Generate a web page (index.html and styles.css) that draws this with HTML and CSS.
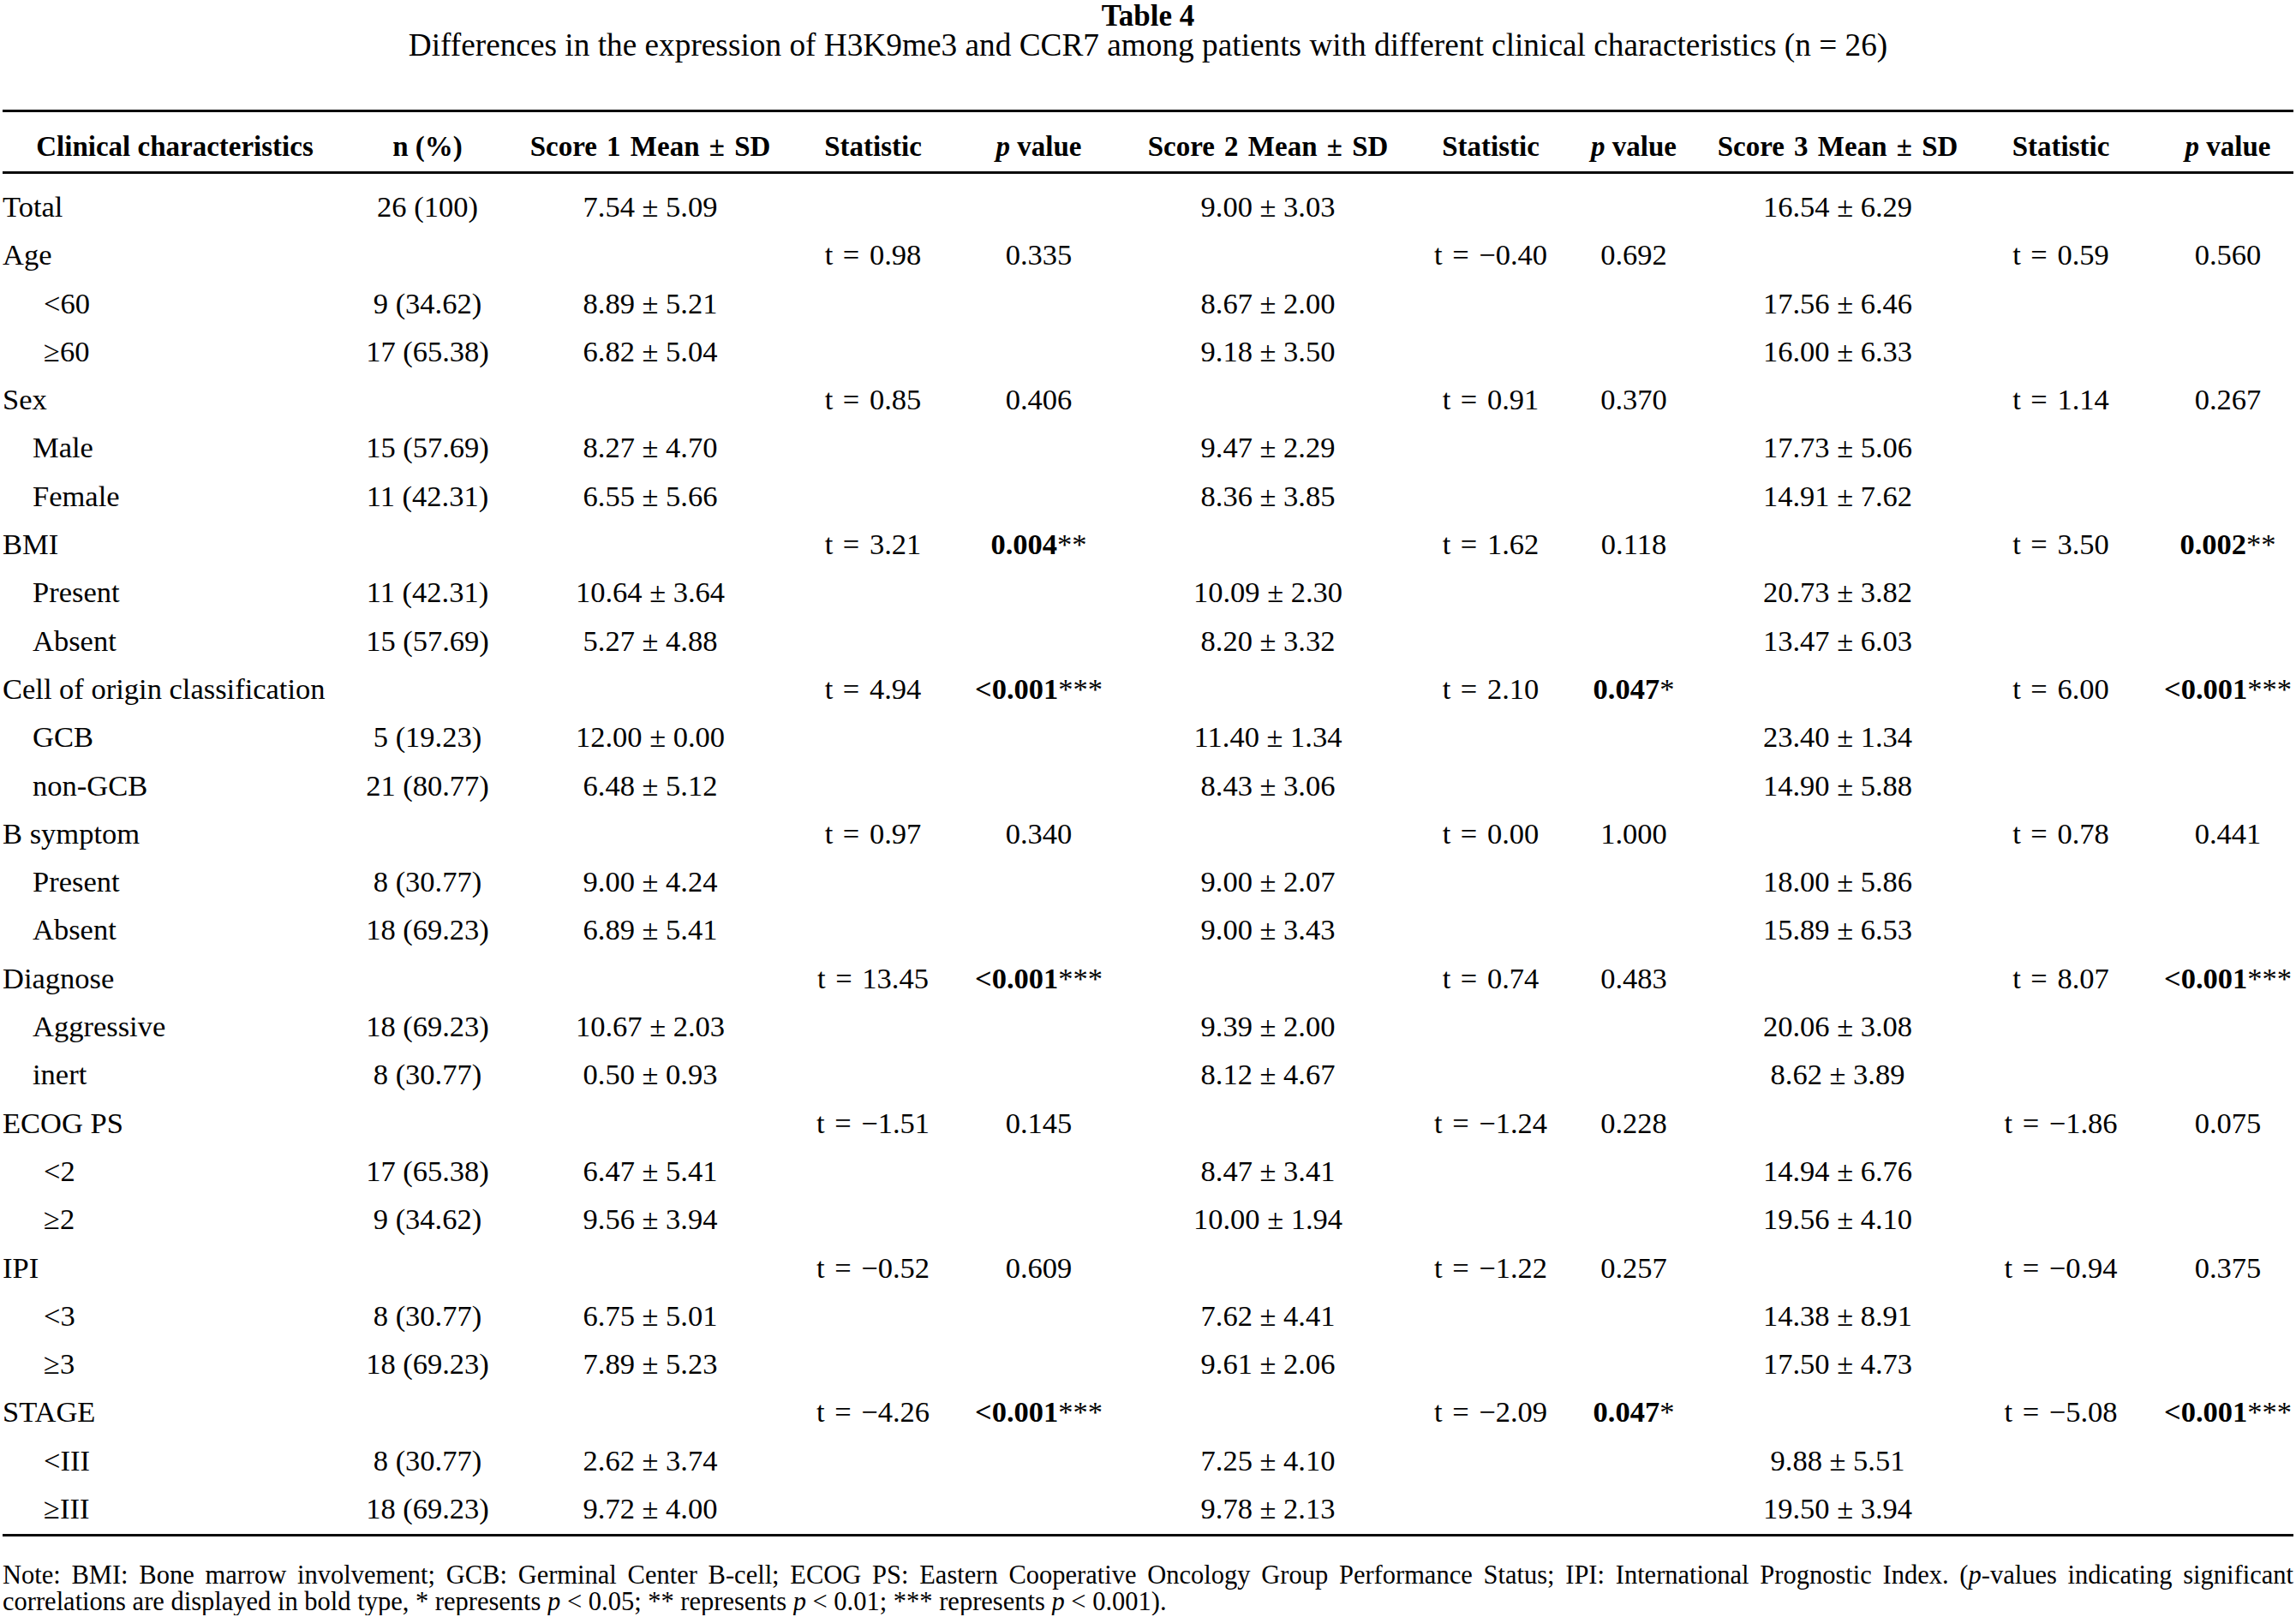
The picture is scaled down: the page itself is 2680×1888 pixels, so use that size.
FILE: index.html
```html
<!DOCTYPE html>
<html lang="en">
<head>
<meta charset="utf-8">
<title>Table 4</title>
<link rel="stylesheet" href="styles.css">
</head>
<body>
<div class="page">
  <div class="title">Table 4</div>
  <div class="subtitle">Differences in the expression of H3K9me3 and CCR7 among patients with different clinical characteristics (n = 26)</div>
  <table class="data">
    <colgroup>
      <col class="c0"><col class="c1"><col class="c2"><col class="c3"><col class="c4"><col class="c5"><col class="c6"><col class="c7"><col class="c8"><col class="c9"><col class="c10">
    </colgroup>
    <thead>
      <tr>
        <th>Clinical characteristics</th>
        <th>n (%)</th>
        <th class="score">Score 1 Mean ± SD</th>
        <th>Statistic</th>
        <th><i>p</i> value</th>
        <th class="score">Score 2 Mean ± SD</th>
        <th>Statistic</th>
        <th><i>p</i> value</th>
        <th class="score">Score 3 Mean ± SD</th>
        <th>Statistic</th>
        <th class="last"><i>p</i> value</th>
      </tr>
    </thead>
    <tbody>
      <tr><td class="lbl">Total</td><td>26 (100)</td><td>7.54 ± 5.09</td><td></td><td></td><td>9.00 ± 3.03</td><td></td><td></td><td>16.54 ± 6.29</td><td></td><td class="last"></td></tr>
      <tr><td class="lbl">Age</td><td></td><td></td><td class="st">t = 0.98</td><td>0.335</td><td></td><td class="st">t = −0.40</td><td>0.692</td><td></td><td class="st">t = 0.59</td><td class="last">0.560</td></tr>
      <tr><td class="lbl sym">&lt;60</td><td>9 (34.62)</td><td>8.89 ± 5.21</td><td></td><td></td><td>8.67 ± 2.00</td><td></td><td></td><td>17.56 ± 6.46</td><td></td><td class="last"></td></tr>
      <tr><td class="lbl sym">≥60</td><td>17 (65.38)</td><td>6.82 ± 5.04</td><td></td><td></td><td>9.18 ± 3.50</td><td></td><td></td><td>16.00 ± 6.33</td><td></td><td class="last"></td></tr>
      <tr><td class="lbl">Sex</td><td></td><td></td><td class="st">t = 0.85</td><td>0.406</td><td></td><td class="st">t = 0.91</td><td>0.370</td><td></td><td class="st">t = 1.14</td><td class="last">0.267</td></tr>
      <tr><td class="lbl sub">Male</td><td>15 (57.69)</td><td>8.27 ± 4.70</td><td></td><td></td><td>9.47 ± 2.29</td><td></td><td></td><td>17.73 ± 5.06</td><td></td><td class="last"></td></tr>
      <tr><td class="lbl sub">Female</td><td>11 (42.31)</td><td>6.55 ± 5.66</td><td></td><td></td><td>8.36 ± 3.85</td><td></td><td></td><td>14.91 ± 7.62</td><td></td><td class="last"></td></tr>
      <tr><td class="lbl">BMI</td><td></td><td></td><td class="st">t = 3.21</td><td><b>0.004</b>**</td><td></td><td class="st">t = 1.62</td><td>0.118</td><td></td><td class="st">t = 3.50</td><td class="last"><b>0.002</b>**</td></tr>
      <tr><td class="lbl sub">Present</td><td>11 (42.31)</td><td>10.64 ± 3.64</td><td></td><td></td><td>10.09 ± 2.30</td><td></td><td></td><td>20.73 ± 3.82</td><td></td><td class="last"></td></tr>
      <tr><td class="lbl sub">Absent</td><td>15 (57.69)</td><td>5.27 ± 4.88</td><td></td><td></td><td>8.20 ± 3.32</td><td></td><td></td><td>13.47 ± 6.03</td><td></td><td class="last"></td></tr>
      <tr><td class="lbl">Cell of origin classification</td><td></td><td></td><td class="st">t = 4.94</td><td><b>&lt;0.001</b>***</td><td></td><td class="st">t = 2.10</td><td><b>0.047</b>*</td><td></td><td class="st">t = 6.00</td><td class="last"><b>&lt;0.001</b>***</td></tr>
      <tr><td class="lbl sub">GCB</td><td>5 (19.23)</td><td>12.00 ± 0.00</td><td></td><td></td><td>11.40 ± 1.34</td><td></td><td></td><td>23.40 ± 1.34</td><td></td><td class="last"></td></tr>
      <tr><td class="lbl sub">non-GCB</td><td>21 (80.77)</td><td>6.48 ± 5.12</td><td></td><td></td><td>8.43 ± 3.06</td><td></td><td></td><td>14.90 ± 5.88</td><td></td><td class="last"></td></tr>
      <tr><td class="lbl">B symptom</td><td></td><td></td><td class="st">t = 0.97</td><td>0.340</td><td></td><td class="st">t = 0.00</td><td>1.000</td><td></td><td class="st">t = 0.78</td><td class="last">0.441</td></tr>
      <tr><td class="lbl sub">Present</td><td>8 (30.77)</td><td>9.00 ± 4.24</td><td></td><td></td><td>9.00 ± 2.07</td><td></td><td></td><td>18.00 ± 5.86</td><td></td><td class="last"></td></tr>
      <tr><td class="lbl sub">Absent</td><td>18 (69.23)</td><td>6.89 ± 5.41</td><td></td><td></td><td>9.00 ± 3.43</td><td></td><td></td><td>15.89 ± 6.53</td><td></td><td class="last"></td></tr>
      <tr><td class="lbl">Diagnose</td><td></td><td></td><td class="st">t = 13.45</td><td><b>&lt;0.001</b>***</td><td></td><td class="st">t = 0.74</td><td>0.483</td><td></td><td class="st">t = 8.07</td><td class="last"><b>&lt;0.001</b>***</td></tr>
      <tr><td class="lbl sub">Aggressive</td><td>18 (69.23)</td><td>10.67 ± 2.03</td><td></td><td></td><td>9.39 ± 2.00</td><td></td><td></td><td>20.06 ± 3.08</td><td></td><td class="last"></td></tr>
      <tr><td class="lbl sub">inert</td><td>8 (30.77)</td><td>0.50 ± 0.93</td><td></td><td></td><td>8.12 ± 4.67</td><td></td><td></td><td>8.62 ± 3.89</td><td></td><td class="last"></td></tr>
      <tr><td class="lbl">ECOG PS</td><td></td><td></td><td class="st">t = −1.51</td><td>0.145</td><td></td><td class="st">t = −1.24</td><td>0.228</td><td></td><td class="st">t = −1.86</td><td class="last">0.075</td></tr>
      <tr><td class="lbl sym">&lt;2</td><td>17 (65.38)</td><td>6.47 ± 5.41</td><td></td><td></td><td>8.47 ± 3.41</td><td></td><td></td><td>14.94 ± 6.76</td><td></td><td class="last"></td></tr>
      <tr><td class="lbl sym">≥2</td><td>9 (34.62)</td><td>9.56 ± 3.94</td><td></td><td></td><td>10.00 ± 1.94</td><td></td><td></td><td>19.56 ± 4.10</td><td></td><td class="last"></td></tr>
      <tr><td class="lbl">IPI</td><td></td><td></td><td class="st">t = −0.52</td><td>0.609</td><td></td><td class="st">t = −1.22</td><td>0.257</td><td></td><td class="st">t = −0.94</td><td class="last">0.375</td></tr>
      <tr><td class="lbl sym">&lt;3</td><td>8 (30.77)</td><td>6.75 ± 5.01</td><td></td><td></td><td>7.62 ± 4.41</td><td></td><td></td><td>14.38 ± 8.91</td><td></td><td class="last"></td></tr>
      <tr><td class="lbl sym">≥3</td><td>18 (69.23)</td><td>7.89 ± 5.23</td><td></td><td></td><td>9.61 ± 2.06</td><td></td><td></td><td>17.50 ± 4.73</td><td></td><td class="last"></td></tr>
      <tr><td class="lbl">STAGE</td><td></td><td></td><td class="st">t = −4.26</td><td><b>&lt;0.001</b>***</td><td></td><td class="st">t = −2.09</td><td><b>0.047</b>*</td><td></td><td class="st">t = −5.08</td><td class="last"><b>&lt;0.001</b>***</td></tr>
      <tr><td class="lbl sym">&lt;III</td><td>8 (30.77)</td><td>2.62 ± 3.74</td><td></td><td></td><td>7.25 ± 4.10</td><td></td><td></td><td>9.88 ± 5.51</td><td></td><td class="last"></td></tr>
      <tr><td class="lbl sym">≥III</td><td>18 (69.23)</td><td>9.72 ± 4.00</td><td></td><td></td><td>9.78 ± 2.13</td><td></td><td></td><td>19.50 ± 3.94</td><td></td><td class="last"></td></tr>
    </tbody>
  </table>
  <p class="note">Note: BMI: Bone marrow involvement; GCB: Germinal Center B-cell; ECOG PS: Eastern Cooperative Oncology Group Performance Status; IPI: International Prognostic Index. (<i>p</i>-values indicating significant correlations are displayed in bold type, * represents <i>p</i> &lt; 0.05; ** represents <i>p</i> &lt; 0.01; *** represents <i>p</i> &lt; 0.001).</p>
</div>
</body>
</html>
```

FILE: styles.css
```css
html, body {
  margin: 0;
  padding: 0;
  background: #ffffff;
}

body {
  font-family: "Liberation Serif", "Times New Roman", serif;
  color: #000000;
}

.page {
  width: 2674px;
  margin-left: 3px;
}

.title {
  text-align: center;
  font-weight: bold;
  font-size: 35px;
  line-height: 38px;
}

.subtitle {
  text-align: center;
  font-size: 37.3px;
  line-height: 30px;
}

.data {
  margin-top: 60px;
  width: 2674px;
  table-layout: fixed;
  border-collapse: separate;
  border-spacing: 0;
  border-top: 3px solid #0a0a0a;
  border-bottom: 3px solid #0a0a0a;
  font-size: 34.5px;
}

.c0 { width: 402px; }
.c1 { width: 188px; }
.c2 { width: 332px; }
.c3 { width: 188px; }
.c4 { width: 199px; }
.c5 { width: 336px; }
.c6 { width: 184px; }
.c7 { width: 150px; }
.c8 { width: 326px; }
.c9 { width: 195px; }
.c10 { width: 174px; }

.data th {
  font-size: 33px;
  font-weight: bold;
  line-height: 40px;
  padding: 20px 0 9px;
  text-align: center;
  white-space: nowrap;
  border-bottom: 3px solid #0a0a0a;
}

.data th.score {
  word-spacing: 3px;
}

.data td {
  padding: 0;
  line-height: 56.3px;
  text-align: center;
  white-space: nowrap;
  vertical-align: top;
}

.data td.st {
  word-spacing: 3px;
}

.data tbody tr:first-child td {
  padding-top: 10px;
}

.data tbody tr:last-child td {
  padding-bottom: 2px;
}

.data th.last,
.data td.last {
  padding-left: 21px;
}

.data td.lbl {
  text-align: left;
}

.data td.sub {
  padding-left: 35px;
}

.data td.sym {
  padding-left: 48px;
}

.note {
  margin: 30px 0 0;
  font-size: 30.5px;
  line-height: 31px;
  text-align: justify;
}
```
